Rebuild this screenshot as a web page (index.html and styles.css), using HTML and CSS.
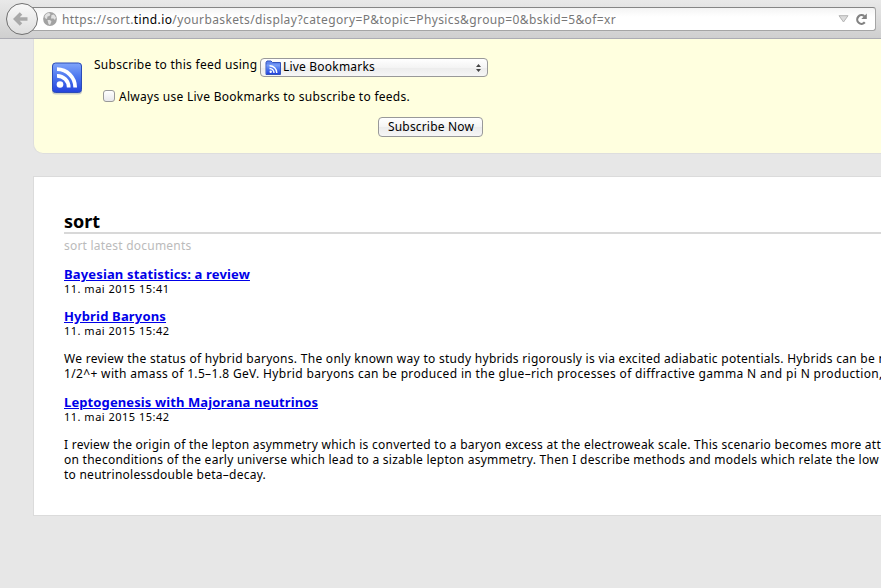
FILE: index.html
```html
<!DOCTYPE html>
<html lang="en">
<head>
<meta charset="utf-8">
<title>sort</title>
<link rel="stylesheet" href="styles.css">
</head>
<body>
<header class="toolbar">
  <div class="back">
    <svg width="16" height="16" viewBox="0 0 16 16"><path d="M8 2.500 2.500 8 8 13.500M3 8H14.500" fill="none" stroke="#a9a9a9" stroke-width="3.500"/></svg>
  </div>
  <div class="urlbar">
    <svg class="globe" width="14" height="14" viewBox="0 0 14 14"><circle cx="7" cy="7" r="6.900" fill="#a2a2a2"/><path d="M1.500 5C2 2.500 4 1 6 1L7.500 2 6.500 4 4.500 4.500 4 7 2.500 6.500ZM8.500 3 11 2.500 13 5.500 12 8 10.500 6.500 8 6.500ZM4.500 8 7 8 8.500 9.500 7 13 5.500 12Z" fill="#e2e2e2"/></svg>
    <span class="url">https://sort.<b>tind.io</b>/yourbaskets/display?category=P&amp;topic=Physics&amp;group=0&amp;bskid=5&amp;of=xr</span>
    <svg class="drop" width="11" height="8" viewBox="0 0 11 8"><path d="M1 .7H10L5.500 7Z" fill="#dcdcdc" stroke="#b4b4b4"/></svg>
    <svg class="reload" width="13" height="13" viewBox="0 0 13 13"><path d="M9.800 9.300A4.300 4.300 0 1 1 9.300 3.200" fill="none" stroke="#828282" stroke-width="2.200"/><path d="M11.800.5V6H6.300Z" fill="#828282"/></svg>
  </div>
</header>
<main>
  <section class="subscribe">
    <svg class="feed-icon" width="32" height="33" viewBox="0 0 32 33">
      <defs><linearGradient id="blue" x1="0" y1="0" x2="0" y2="1"><stop offset="0" stop-color="#80a5fa"/><stop offset=".5" stop-color="#4a74ee"/><stop offset="1" stop-color="#2342dc"/></linearGradient></defs>
      <rect x="1" y="2" width="30" height="30.500" rx="3.500" fill="#a9aebb" opacity=".6"/>
      <rect x="1.500" y="1" width="29" height="29.500" rx="3" fill="url(#blue)" stroke="#2b4cb8"/>
      <circle cx="9" cy="22.500" r="3.300" fill="#fff"/>
      <path d="M6 13.800A11.500 11.500 0 0 1 17.700 25.500M6 7.200A18.300 18.300 0 0 1 24.200 25.500" fill="none" stroke="#fff" stroke-width="3.700"/>
    </svg>
    <div class="form">
      <div class="using">
        <span class="using-label">Subscribe to this feed using</span>
        <div class="select">
          <svg width="17" height="16" viewBox="0 0 17 16"><path d="M1 14.500V2.500L2 1H6L7.500 2.500H15.500V14.500Z" fill="#6186ee" stroke="#3454bd"/><path d="M1.500 4.500H15V14H1.500Z" fill="url(#blue)"/><circle cx="5.700" cy="11.700" r="1.200" fill="#fff"/><path d="M4.500 8.500A4.500 4.500 0 0 1 9 13M4.500 5.700A7.300 7.300 0 0 1 11.800 13" fill="none" stroke="#fff" stroke-width="1.400"/></svg>
          <span>Live Bookmarks</span>
          <svg class="arrows" width="5" height="8" viewBox="0 0 5 8"><path d="M2.500 0 5 3H0ZM2.500 8 0 5H5Z" fill="#444"/></svg>
        </div>
      </div>
      <div class="always"><span class="check"></span><span>Always use Live Bookmarks to subscribe to feeds.</span></div>
      <div class="button">Subscribe Now</div>
    </div>
  </section>
  <section class="feed">
    <h1>sort</h1>
    <h2>sort latest documents</h2>
    <article>
      <h3><a>Bayesian statistics: a review</a></h3>
      <time>11. mai 2015 15:41</time>
    </article>
    <article>
      <h3><a class="t2">Hybrid Baryons</a></h3>
      <time>11. mai 2015 15:42</time>
      <p><span class="l1">We review the status of hybrid baryons. The only known way to study hybrids rigorously is via excited adiabatic potentials. Hybrids can be n</span><br><span class="l2">1/2^+ with amass of 1.5–1.8 GeV. Hybrid baryons can be produced in the glue–rich processes of diffractive gamma N and pi N production,</span></p>
    </article>
    <article>
      <h3><a class="t3">Leptogenesis with Majorana neutrinos</a></h3>
      <time>11. mai 2015 15:42</time>
      <p><span class="l3">I review the origin of the lepton asymmetry which is converted to a baryon excess at the electroweak scale. This scenario becomes more att</span><br><span class="l4">on theconditions of the early universe which lead to a sizable lepton asymmetry. Then I describe methods and models which relate the low</span><br><span class="l5">to neutrinolessdouble beta–decay.</span></p>
    </article>
  </section>
</main>
</body>
</html>
```
FILE: styles.css
```css
* { box-sizing: border-box; }
body {
  margin: 0;
  height: 588px;
  overflow: hidden;
  background: #e7e7e7;
  color: #000;
  font: 12px/15px "Noto Sans", "Open Sans", sans-serif;
  letter-spacing: .27px;
  white-space: nowrap;
}
svg { display: block; flex: none; }
main { overflow: hidden; }
.toolbar {
  display: flex;
  align-items: flex-start;
  height: 39px;
  padding: 3px 5px 0 6px;
  background: linear-gradient(#e9e9e9, #cfcfcf);
  border-bottom: 1px solid #acacb4;
}
.back {
  position: relative;
  z-index: 1;
  display: flex;
  align-items: center;
  justify-content: center;
  flex: none;
  width: 32px;
  height: 32px;
  border: 1px solid #707070;
  border-radius: 50%;
  background: linear-gradient(#f8f8f8, #dedede);
}
.back svg { margin-right: 2px; }
.urlbar {
  display: flex;
  align-items: center;
  flex: 1;
  height: 24px;
  margin: 4px 0 0 -6px;
  padding: 0 7px 0 10px;
  border: 1px solid #a5a5a5;
  border-top-color: #868686;
  border-radius: 0 3px 3px 0;
  background: linear-gradient(#f4f4f4, #fff 40%);
}
.url { margin-left: 5px; color: #777; letter-spacing: .38px; }
.url b { font-weight: 400; color: #000; }
.drop { margin-left: auto; }
.reload { margin-left: 6px; }
.subscribe {
  display: flex;
  width: 1100px;
  height: 115px;
  margin-left: 33px;
  padding: 0 0 0 17px;
  border: 1px solid #dedede;
  border-top: 0;
  border-radius: 0 0 0 10px;
  background: #ffffdf;
}
.feed-icon { margin-top: 23px; }
.form { width: 394px; margin: 17px 0 0 11px; }
.using { display: flex; }
.using-label { width: 166px; margin-top: 1px; }
.select, .button {
  display: flex;
  align-items: center;
  border: 1px solid #999;
  border-radius: 4px;
  background: linear-gradient(#fff, #f4f4f4 50%, #ececec 51%, #f6f6f6);
}
.select {
  width: 228px;
  height: 19px;
  margin-top: 2px;
  padding: 0 6px 0 4px;
  letter-spacing: .2px;
}
.select span { margin: 0 0 2px 1px; }
.arrows { margin-left: auto; }
.always { display: flex; margin: 12px 0 0 9px; }
.check {
  width: 12px;
  height: 12px;
  margin: 1px 4px 0 0;
  border: 1px solid #999;
  border-radius: 3px;
  background: linear-gradient(#fff, #e8e8ec);
}
.button {
  justify-content: center;
  width: 105px;
  height: 20px;
  margin: 13px 0 0 284px;
  padding: 0 0 2px 1px;
  letter-spacing: .17px;
}
.feed {
  width: 1100px;
  height: 340px;
  margin: 22px 0 0 33px;
  padding: 34px 30px 0;
  border: 1px solid #dbdbdb;
  background: #fff;
}
h1, h2, h3, p { margin: 0; }
h1 {
  height: 23px;
  border-bottom: 2px solid #d8d8d8;
  font-size: 18px;
  line-height: 20px;
  letter-spacing: 0;
}
h2 {
  margin-top: 4px;
  color: #bbb;
  font-size: 12px;
  font-weight: 400;
  letter-spacing: .22px;
}
article { margin-top: 13px; }
h3 { font-size: 13px; line-height: 16px; letter-spacing: .15px; }
h3 a { color: #0000e8; text-decoration: underline; }
time { display: block; font-size: 11px; line-height: 13px; letter-spacing: .49px; }
p { margin-top: 14px; }
.t2 { letter-spacing: .17px; }
.t3 { letter-spacing: .11px; }
.l1 { letter-spacing: .286px; }
.l2 { letter-spacing: .345px; }
.l3 { letter-spacing: .25px; }
.l4 { letter-spacing: .261px; }
.l5 { letter-spacing: .247px; }
```
